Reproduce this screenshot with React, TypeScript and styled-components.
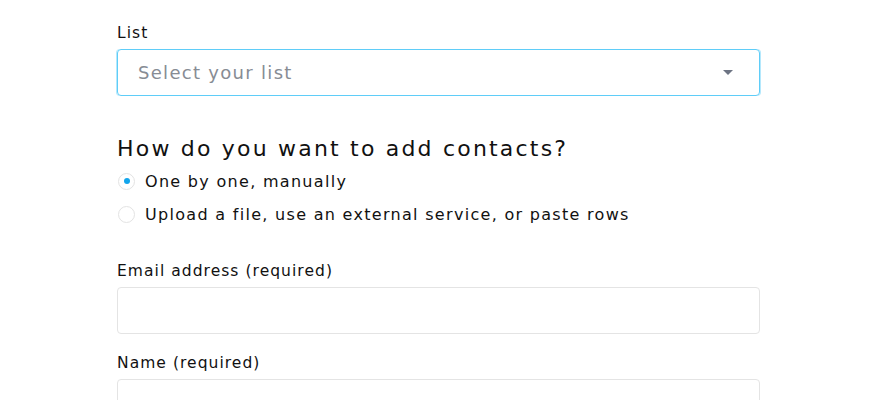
import React from "react";
import styled, { createGlobalStyle } from "styled-components";

const Global = createGlobalStyle`
  html, body { margin: 0; padding: 0; background: #ffffff; }
  body { font-family: "DejaVu Sans", "Roboto", sans-serif; color: #111111; }
  * { box-sizing: border-box; }
`;

const Form = styled.form`
  width: 643px;
  margin-left: 117px;
  padding-top: 23px;
  display: flex;
  flex-direction: column;
`;

const Field = styled.div<{ $gapTop?: number }>`
  display: flex;
  flex-direction: column;
  gap: 6px;
  margin-top: ${(p) => p.$gapTop ?? 0}px;
`;

const Label = styled.label`
  font-size: 15.5px;
  line-height: 20px;
  letter-spacing: 1.05px;
  color: #111111;
`;

const SelectBox = styled.div`
  height: 47px;
  border: 1px solid #5fcdf8;
  box-shadow: 1px 0 0 0 #b5e8fc, -1px 0 0 0 #b5e8fc;
  border-radius: 4px;
  display: flex;
  align-items: center;
  justify-content: space-between;
  padding: 0 26px 0 20px;
`;

const Placeholder = styled.span`
  font-size: 18px;
  letter-spacing: 1.3px;
  color: #878c94;
`;

const Input = styled.div`
  height: 47px;
  border: 1px solid #e4e4e4;
  border-radius: 4px;
  background: #fff;
`;

const Heading = styled.h2`
  margin: 39px 0 0;
  font-size: 22px;
  line-height: 28px;
  font-weight: 400;
  letter-spacing: 2.2px;
  color: #111111;
`;

const Radios = styled.div`
  margin-top: 7px;
  display: flex;
  flex-direction: column;
  gap: 11px;
`;

const RadioRow = styled.div`
  display: flex;
  align-items: center;
  gap: 10px;
  height: 22px;
  padding-left: 1px;
`;

const Circle = styled.span<{ $checked?: boolean }>`
  width: 17px;
  height: 17px;
  border-radius: 50%;
  border: 1px solid #e3e3e3;
  background: #fff;
  display: flex;
  align-items: center;
  justify-content: center;
  &::after {
    content: "";
    width: 6px;
    height: 6px;
    border-radius: 50%;
    background: ${(p) => (p.$checked ? "#12a5ec" : "transparent")};
  }
`;

const RadioText = styled.span`
  font-size: 16px;
  letter-spacing: 1.3px;
  color: #111111;
`;

const Caret = () => (
  <svg width="10" height="5" viewBox="0 0 10 5">
    <path d="M0 0 L10 0 L5 5 Z" fill="#6d7483" />
  </svg>
);

export default function App() {
  return (
    <>
      <Global />
      <Form>
        <Field>
          <Label>List</Label>
          <SelectBox>
            <Placeholder>Select your list</Placeholder>
            <Caret />
          </SelectBox>
        </Field>
        <Heading>How do you want to add contacts?</Heading>
        <Radios>
          <RadioRow>
            <Circle $checked />
            <RadioText>One by one, manually</RadioText>
          </RadioRow>
          <RadioRow>
            <Circle />
            <RadioText>Upload a file, use an external service, or paste rows</RadioText>
          </RadioRow>
        </Radios>
        <Field $gapTop={36}>
          <Label>Email address (required)</Label>
          <Input />
        </Field>
        <Field $gapTop={19}>
          <Label>Name (required)</Label>
          <Input />
        </Field>
      </Form>
    </>
  );
}
